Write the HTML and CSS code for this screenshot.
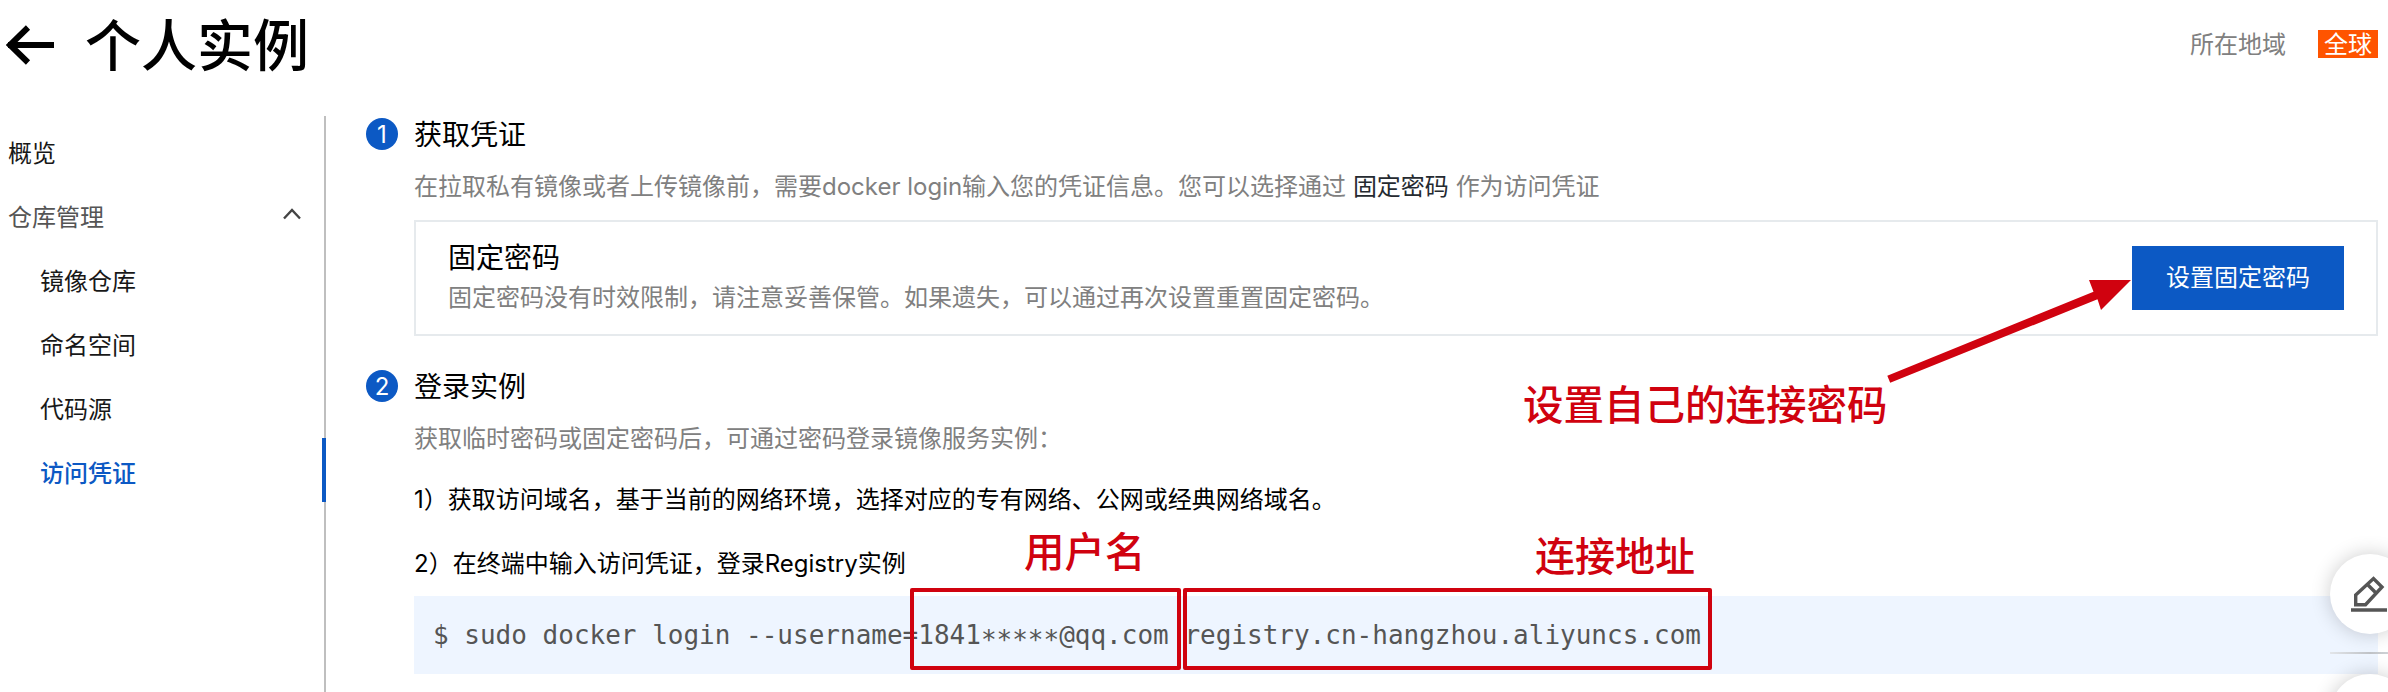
FILE: index.html
```html
<!DOCTYPE html>
<html lang="zh-CN">
<head>
<meta charset="utf-8">
<title>个人实例</title>
<link rel="stylesheet" href="styles.css">
</head>
<body>
<div class="page">
  <header class="header">
    <svg class="back" width="48" height="40" viewBox="0 0 48 40" fill="none" stroke="#000" stroke-width="6"><path d="M2 20H48M22 2.5L4 20L22 37.5"/></svg>
    <h1 class="title">个人实例</h1>
    <div class="region"><span class="region-name">所在地域</span><span class="badge">全球</span></div>
  </header>
  <div class="body">
    <nav class="sidebar">
      <a class="item">概览</a>
      <a class="item group">仓库管理
        <svg width="18" height="12" viewBox="0 0 18 12" fill="none" stroke="#444" stroke-width="2.4"><path d="M1 10.5L9 2L17 10.5"/></svg>
      </a>
      <a class="item sub">镜像仓库</a>
      <a class="item sub">命名空间</a>
      <a class="item sub">代码源</a>
      <a class="item sub active">访问凭证</a>
    </nav>
    <main class="main">
      <section class="step">
        <span class="num">1</span>
        <div class="content">
          <h2 class="heading">获取凭证</h2>
          <p class="desc">在拉取私有镜像或者上传镜像前，需要docker login输入您的凭证信息。您可以选择通过 <b>固定密码</b> 作为访问凭证</p>
          <div class="card">
            <div>
              <h3 class="heading">固定密码</h3>
              <p class="note">固定密码没有时效限制，请注意妥善保管。如果遗失，可以通过再次设置重置固定密码。</p>
            </div>
            <button class="button">设置固定密码</button>
          </div>
        </div>
      </section>
      <section class="step second">
        <span class="num">2</span>
        <div class="content">
          <h2 class="heading">登录实例</h2>
          <p class="desc">获取临时密码或固定密码后，可通过密码登录镜像服务实例：</p>
          <p class="line first">1）获取访问域名，基于当前的网络环境，选择对应的专有网络、公网或经典网络域名。</p>
          <p class="line">2）在终端中输入访问凭证，登录Registry实例</p>
          <pre class="code">$ sudo docker login --username=1841<span class="stars">*****</span>@qq.com registry.cn-hangzhou.aliyuncs.com</pre>
        </div>
      </section>
    </main>
  </div>

  <div class="float edit">
    <svg width="36" height="36" viewBox="0 0 36 36" fill="none" stroke="#555" stroke-width="3.4"><path d="M4.7 28.7V19L22.5 2.5L31 11L14.5 28.7ZM16.5 8.5L25 17"/><path d="M0 34H36"/></svg>
  </div>
  <div class="float-line"></div>
  <div class="float next"></div>

  <div class="mark box-user"></div>
  <div class="mark box-host"></div>
  <div class="label label-user">用户名</div>
  <div class="label label-host">连接地址</div>
  <div class="label label-pass">设置自己的连接密码</div>
  <svg class="arrow" width="250" height="110" viewBox="0 0 250 110"><path fill="#d0020f" d="M7.3 100.7L213.5 16.7L209 5H251L221 35L217.5 24.3L10.2 107.7Z"/></svg>
</div>
</body>
</html>
```
FILE: styles.css
```css
* { box-sizing: border-box; }
body { margin: 0; background: #fff; color: #000; font: 24px/36px Inter, "Noto Sans CJK SC", sans-serif; }
h1, h2, h3, p, pre { margin: 0; font-weight: 400; }
.page { position: relative; width: 2388px; height: 692px; overflow: hidden; display: flex; flex-direction: column; }
.header { height: 116px; padding: 0 10px 26px 6px; display: flex; align-items: center; flex: none; }
.title { margin-left: 31px; padding-top: 2px; font-size: 56px; line-height: 80px; font-weight: 500; }
.region { margin-left: auto; display: flex; align-items: center; gap: 32px; color: #808080; padding-bottom: 2px; }
.region-name { padding-top: 2px; }
.badge { width: 60px; height: 28px; line-height: 29px; text-align: center; color: #fff; background: #ff5400; }
.body { flex: 1; display: flex; min-height: 0; }
.sidebar { width: 326px; flex: none; border-right: 2px solid #bfbfbf; padding-top: 2px; }
.item { display: flex; align-items: center; height: 64px; padding: 8px 23px 0 8px; color: #181818; }
.group { color: #555; justify-content: space-between; }
.group svg { margin-top: -8px; }
.sub { padding-left: 40px; }
.active { color: #0c59c4; font-weight: 500; margin-right: -2px; border-right: 4px solid #0c59c4; }
.main { flex: 1; padding: 2px 10px 0 40px; }
.step { display: flex; gap: 16px; height: 252px; }
.step.second { height: 320px; }
.num { width: 32px; height: 32px; flex: none; border-radius: 50%; background: #0c59c4; color: #fff; text-align: center; line-height: 33px; }
.content { flex: 1; }
.heading { font-size: 28px; line-height: 34px; }
.desc { margin-top: 18px; line-height: 34px; color: #808080; }
.desc b { font-weight: 400; color: #252a30; }
.card { margin-top: 16px; height: 116px; border: 2px solid #e6eaed; padding: 0 32px; display: flex; align-items: center; justify-content: space-between; }
.note { color: #808080; margin-top: 5px; line-height: 36px; }
.button { width: 212px; height: 64px; border: 0; padding: 0; background: #0c59c4; color: #fff; font: inherit; }
.line { margin-top: 28px; line-height: 36px; }
.line.first { margin-top: 26px; }
.code { margin-top: 14px; height: 78px; padding-left: 19px; background: #eef5ff; color: #555; font: 26px/78px "DejaVu Sans Mono", monospace; }
.stars { line-height: 0; vertical-align: -5px; }
.float { position: absolute; left: 2330px; width: 80px; height: 80px; border-radius: 50%; background: #fff; box-shadow: 0 0 20px rgba(0, 0, 0, .2); }
.edit { top: 554px; padding: 22px 0 0 21px; }
.edit svg { display: block; }
.next { top: 674px; }
.float-line { position: absolute; left: 2330px; top: 652px; width: 80px; height: 2px; background: linear-gradient(90deg, #e2e5e9, #bfc2c6 50%, #e2e5e9); }
.mark { position: absolute; top: 588px; height: 82px; border: 4px solid #d0020f; border-radius: 2px; }
.box-user { left: 910px; width: 271px; }
.box-host { left: 1183px; width: 529px; }
.label { position: absolute; color: #d0020f; font-size: 40px; line-height: 48px; font-weight: 500; white-space: nowrap; }
.label-user { left: 1024px; top: 529px; font-size: 40.5px; }
.label-host { left: 1535px; top: 533px; }
.label-pass { left: 1523px; top: 382px; font-size: 40.5px; }
.arrow { position: absolute; left: 1880px; top: 275px; overflow: visible; }
```
